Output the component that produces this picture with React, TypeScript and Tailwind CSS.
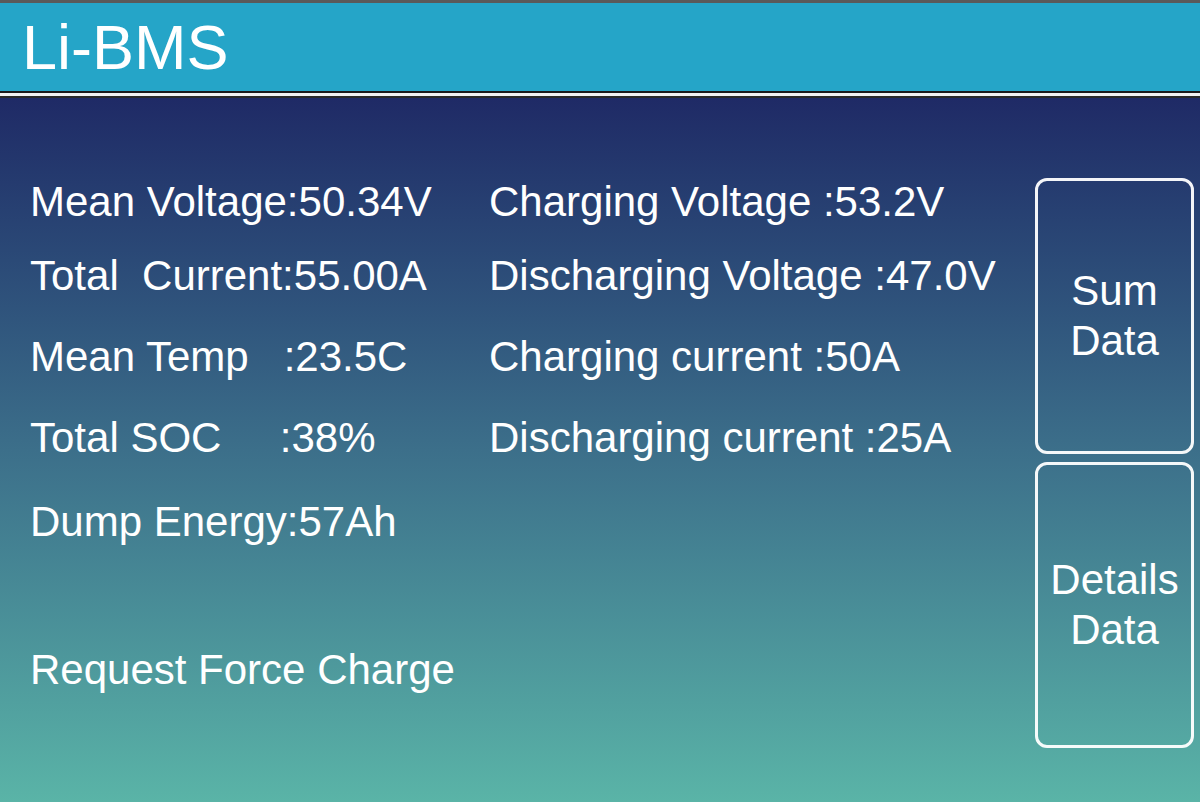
const font = { fontFamily: '"Liberation Sans", Arial, sans-serif' };

const leftRows = [
  { text: "Mean Voltage:50.34V", mt: "mt-0" },
  { text: "Total\u00a0\u00a0Current:55.00A", mt: "mt-[26px]" },
  { text: "Mean Temp\u00a0\u00a0\u00a0:23.5C", mt: "mt-[33px]" },
  { text: "Total SOC\u00a0\u00a0\u00a0\u00a0\u00a0:38%", mt: "mt-[33px]" },
  { text: "Dump Energy:57Ah", mt: "mt-[36px]" },
  { text: "Request Force Charge", mt: "mt-[100px]" },
];

const rightRows = [
  { text: "Charging Voltage :53.2V", mt: "mt-0" },
  { text: "Discharging Voltage :47.0V", mt: "mt-[26px]" },
  { text: "Charging current :50A", mt: "mt-[33px]" },
  { text: "Discharging current :25A", mt: "mt-[33px]" },
];

function SideButton({ lines, className }: { lines: string[]; className: string }) {
  return (
    <button
      className={`w-[159px] rounded-[12px] border-[3px] border-white/95 bg-transparent text-white text-[42px] leading-[50px] flex flex-col items-center justify-center ${className}`}
      style={font}
    >
      {lines.map((l) => (
        <span key={l}>{l}</span>
      ))}
    </button>
  );
}

export default function App() {
  return (
    <div className="w-[1200px] h-[802px] overflow-hidden flex flex-col bg-[#1f2a66]" style={font}>
      <div className="h-[3px] bg-[#5a5a5a]" />
      <div className="h-[88px] bg-[#25a5c8] flex items-center pl-[22px]">
        <span className="text-white text-[63px] leading-none">Li-BMS</span>
      </div>
      <div className="h-[2px] bg-[#1b1b1b]" />
      <div className="h-[3px] bg-[#f2f2f2]" />
      <div className="h-[2px] bg-[#2a2a2a]" />
      <div className="flex-1 flex bg-gradient-to-b from-[#1f2a66] via-[#3c6f8a] to-[#5ab4a7]">
        <div className="w-[489px] shrink-0 pl-[30px] pt-[80px] flex flex-col text-white text-[42px] leading-[48px] whitespace-pre">
          {leftRows.map((r) => (
            <div key={r.text} className={r.mt}>
              {r.text}
            </div>
          ))}
        </div>
        <div className="w-[546px] shrink-0 pt-[80px] flex flex-col text-white text-[42px] leading-[48px] whitespace-pre">
          {rightRows.map((r) => (
            <div key={r.text} className={r.mt}>
              {r.text}
            </div>
          ))}
        </div>
        <div className="shrink-0 pt-[80px] flex flex-col gap-[8px]">
          <SideButton lines={["Sum", "Data"]} className="h-[276px]" />
          <SideButton lines={["Details", "Data"]} className="h-[286px]" />
        </div>
      </div>
    </div>
  );
}
